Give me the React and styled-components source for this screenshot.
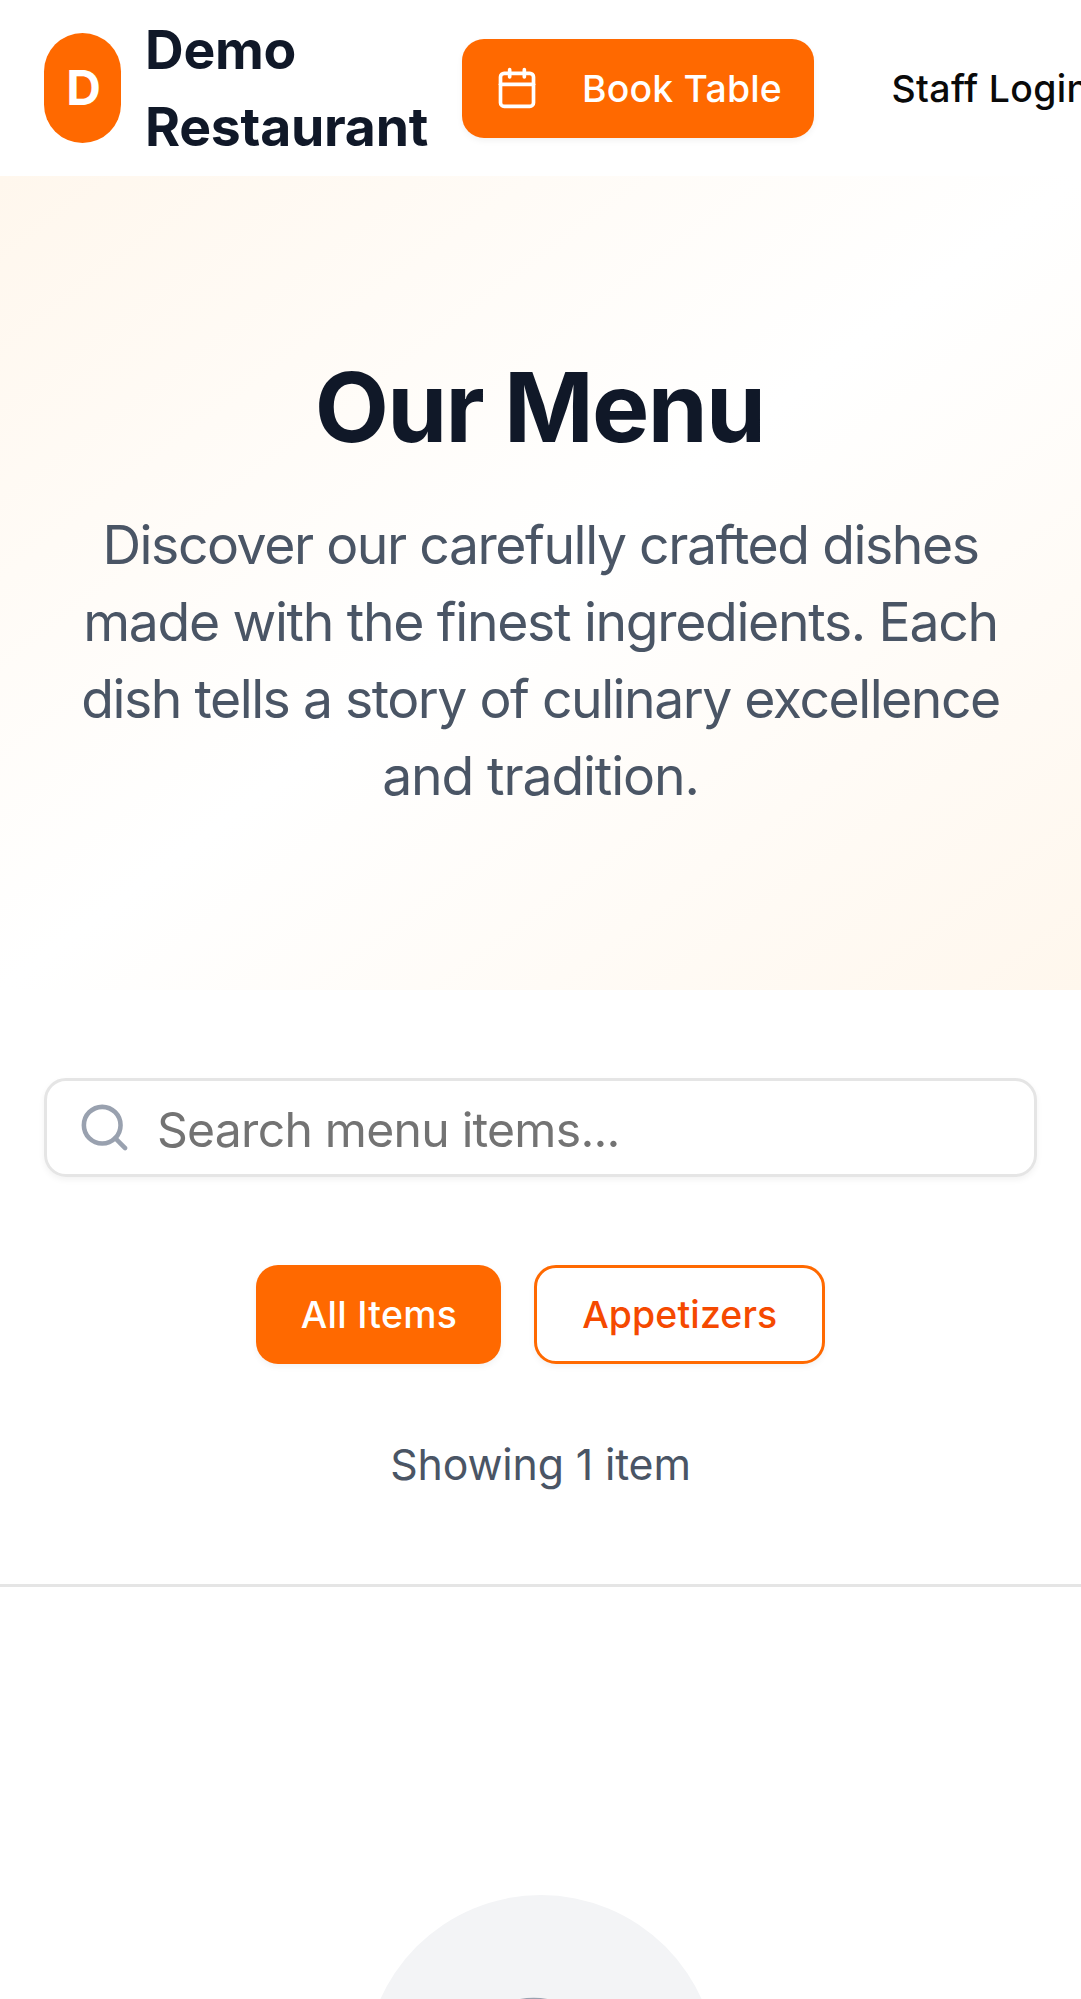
import React from "react";
import styled, { createGlobalStyle } from "styled-components";
import { Calendar, Search } from "lucide-react";

const GlobalStyle = createGlobalStyle`
  *, *::before, *::after { box-sizing: border-box; }
  html, body { margin: 0; overflow: hidden; }
  body {
    background: #ffffff;
    color: #0a0a0a;
    font-family: Inter, "Liberation Sans", sans-serif;
  }
`;

const Page = styled.div`
  width: 100%;
  height: 1999px;
  overflow: hidden;
  background: #ffffff;
`;

const Header = styled.header`
  display: flex;
  align-items: center;
  height: 176px;
  padding: 0 44px;
  background: #ffffff;
`;

const Brand = styled.div`
  display: flex;
  flex: none;
  align-items: center;
  gap: 22px;
  width: 418px;
`;

const BrandMark = styled.div`
  display: flex;
  flex: none;
  align-items: center;
  justify-content: center;
  width: 77px;
  height: 110px;
  padding: 0 0 2px 2px;
  border-radius: 39px;
  background: #ff6900;
  color: #ffffff;
  font-size: 48px;
  font-weight: 700;
`;

const BrandName = styled.span`
  padding-left: 2px;
  color: #101828;
  font-size: 53.5px;
  font-weight: 700;
  line-height: 77px;
  letter-spacing: -0.25px;
`;

const Button = styled.button`
  display: inline-flex;
  flex: none;
  align-items: center;
  justify-content: center;
  width: ${({ $width }) => $width}px;
  height: 99px;
  padding: 0 0 0 1px;
  border: 0;
  border-radius: 22px;
  background: #ff6900;
  box-shadow: 0 3px 6px rgba(0, 0, 0, 0.05);
  color: #ffffff;
  font: 500 37.4px Inter, "Liberation Sans", sans-serif;
  letter-spacing: 0.3px;
  white-space: nowrap;
`;

const BookButton = styled(Button)`
  justify-content: flex-start;
  gap: 43px;
  padding-left: 33px;
  letter-spacing: 0.2px;
`;

const OutlineButton = styled(Button)`
  border: 3px solid #ff6900;
  background: #ffffff;
  color: #f54900;
  letter-spacing: 0.15px;
`;

const GhostButton = styled(Button)`
  margin-left: 44px;
  background: transparent;
  box-shadow: none;
  color: #0a0a0a;
  letter-spacing: 0.35px;
`;

const Hero = styled.section`
  height: 814px;
  padding: 176px 44px;
  background: linear-gradient(to bottom right, #fff7ed, #ffffff, #fff7ed);
  text-align: center;
`;

const HeroTitle = styled.h1`
  margin: 0 0 44px;
  padding-right: 2px;
  color: #101828;
  font-size: 96.3px;
  font-weight: 700;
  line-height: 110px;
  letter-spacing: -1.7px;
`;

const HeroText = styled.p`
  margin: 0;
  color: #4a5565;
  font-size: 53.5px;
  line-height: 77px;
`;

const HeroLine = styled.span`
  display: block;
  letter-spacing: ${({ $tracking }) => $tracking}px;
  white-space: nowrap;
`;

const Filters = styled.section`
  display: flex;
  flex-direction: column;
  align-items: center;
  height: 597px;
  padding: 88px 44px 0;
  border-bottom: 3px solid #e5e5e5;
`;

const SearchBox = styled.label`
  display: flex;
  align-items: center;
  gap: 25px;
  width: 100%;
  height: 99px;
  padding: 0 30px;
  border: 3px solid #e5e5e5;
  border-radius: 22px;
  box-shadow: 0 3px 6px rgba(0, 0, 0, 0.05);
  color: #99a1af;

  svg { flex: none; }
`;

const SearchInput = styled.input`
  flex: 1;
  min-width: 0;
  height: 93px;
  padding: 3px 0 0;
  border: 0;
  outline: 0;
  background: transparent;
  font: 400 48.1px Inter, "Liberation Sans", sans-serif;
  letter-spacing: -0.75px;

  &::placeholder { color: #737373; opacity: 1; }
`;

const Categories = styled.div`
  display: flex;
  gap: 33px;
  margin-top: 88px;
`;

const ResultCount = styled.p`
  margin: 68px 0 0;
  color: #4a5565;
  font-size: 42.8px;
  line-height: 66px;
  letter-spacing: -0.14px;
`;

const Results = styled.section`
  display: flex;
  justify-content: center;
  padding-top: 308px;
`;

const EmptyMark = styled.div`
  display: flex;
  align-items: center;
  justify-content: center;
  width: 352px;
  height: 352px;
  margin-left: 1px;
  border-radius: 50%;
  background: #f3f4f6;
  color: #99a1af;
`;

const heroLines = [
  { text: "Discover our carefully crafted dishes", tracking: -1.45 },
  { text: "made with the finest ingredients. Each", tracking: -1.33 },
  { text: "dish tells a story of culinary excellence", tracking: -1.49 },
  { text: "and tradition.", tracking: -1.13 },
];

export default function App() {
  return (
    <Page>
      <GlobalStyle />
      <Header>
        <Brand>
          <BrandMark>D</BrandMark>
          <BrandName>Demo Restaurant</BrandName>
        </Brand>
        <BookButton $width={352}>
          <Calendar size={44} strokeWidth={2} />
          Book Table
        </BookButton>
        <GhostButton $width={264}>Staff Login</GhostButton>
      </Header>
      <Hero>
        <HeroTitle>Our Menu</HeroTitle>
        <HeroText>
          {heroLines.map(({ text, tracking }) => (
            <HeroLine key={text} $tracking={tracking}>{text} </HeroLine>
          ))}
        </HeroText>
      </Hero>
      <Filters>
        <SearchBox>
          <Search size={55} strokeWidth={2} />
          <SearchInput placeholder="Search menu items..." />
        </SearchBox>
        <Categories>
          <Button $width={244.5}>All Items</Button>
          <OutlineButton $width={291}>Appetizers</OutlineButton>
        </Categories>
        <ResultCount>Showing 1 item</ResultCount>
      </Filters>
      <Results>
        <EmptyMark>
          <Search size={176} strokeWidth={2} />
        </EmptyMark>
      </Results>
    </Page>
  );
}
